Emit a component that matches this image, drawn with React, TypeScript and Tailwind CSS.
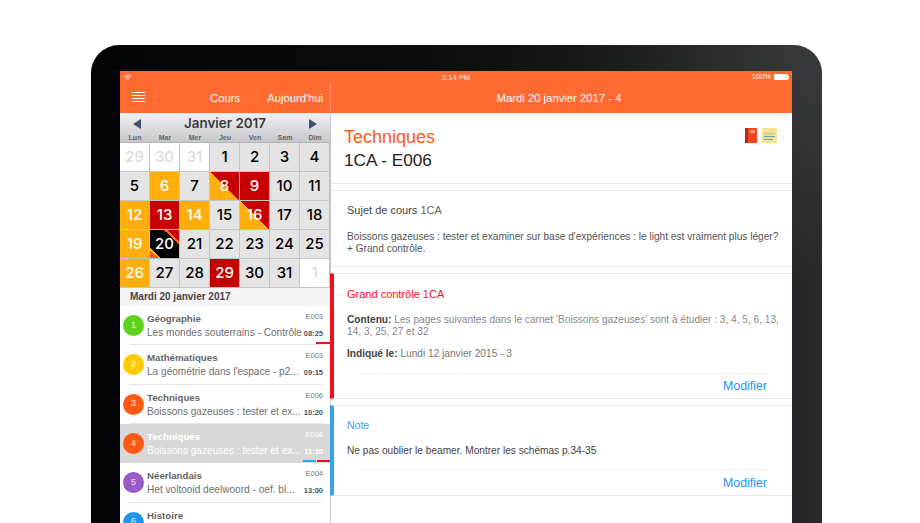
const days = [
  { n: 29, c: "muted" }, { n: 30, c: "muted" }, { n: 31, c: "muted" }, { n: 1 }, { n: 2 }, { n: 3 }, { n: 4 },
  { n: 5 }, { n: 6, c: "amber" }, { n: 7 }, { n: 8, c: "split" }, { n: 9, c: "red" }, { n: 10 }, { n: 11 },
  { n: 12, c: "amber" }, { n: 13, c: "red" }, { n: 14, c: "amber" }, { n: 15 }, { n: 16, c: "split" }, { n: 17 }, { n: 18 },
  { n: 19, c: "amber" }, { n: 20, c: "today" }, { n: 21 }, { n: 22 }, { n: 23 }, { n: 24 }, { n: 25 },
  { n: 26, c: "amber" }, { n: 27 }, { n: 28 }, { n: 29, c: "red" }, { n: 30 }, { n: 31 }, { n: 1, c: "muted" },
];

const dayStyles: Record<string, string> = {
  default: "bg-[#e4e4e4] text-black",
  muted: "bg-white text-[#dcdcdc]",
  amber: "bg-[#ffae0b] text-white",
  red: "bg-[#c60000] text-white",
  split: "bg-[linear-gradient(to_top_right,#ffae0b_50%,#c60000_50%)] text-white",
  today:
    "bg-[linear-gradient(to_top_right,#ff5a13_14%,#ffae0b_14%,#ffae0b_18%,#000_18%,#000_74%,#ff6a13_74%,#ff6a13_80%,#c60000_80%)] text-white",
};

const lessons = [
  { n: 1, color: "bg-[#5fd31c]", title: "Géographie", room: "E003", text: "Les mondes souterrains - Contrôle", time: "08:25" },
  { n: 2, color: "bg-[#ffcb05]", title: "Mathématiques", room: "E003", text: "La géométrie dans l'espace - p2...", time: "09:15" },
  { n: 3, color: "bg-[#ff5a14]", title: "Techniques", room: "E006", text: "Boissons gazeuses : tester et ex...", time: "10:20" },
  { n: 4, color: "bg-[#ff5a14]", title: "Techniques", room: "E006", text: "Boissons gazeuses : tester et ex...", time: "11:10", active: true },
  { n: 5, color: "bg-[#9a5ac8]", title: "Néerlandais", room: "E004", text: "Het voltooid deelwoord - oef. bl...", time: "13:00" },
  { n: 6, color: "bg-[#1f96ee]", title: "Histoire", room: "", text: "", time: "" },
];

function Wifi() {
  return (
    <svg width="9" height="7" viewBox="0 0 9 7" fill="none" stroke="#fff" strokeWidth="0.9">
      <path d="M0.5 2.4C2.8 0.5 6.2 0.5 8.5 2.4" />
      <path d="M2 3.9C3.4 2.8 5.6 2.8 7 3.9" />
      <path d="M3.4 5.3C4 4.8 5 4.8 5.6 5.3" />
    </svg>
  );
}

function Battery() {
  return (
    <span className="flex items-center">
      <span className="h-[6px] w-[14px] rounded-[1px] bg-white" />
      <span className="h-[3px] w-[1px] bg-white" />
    </span>
  );
}

function Hamburger() {
  return (
    <div className="-mt-[3px] flex w-[13px] flex-col gap-[2px]">
      <span className="h-px bg-white" />
      <span className="h-px bg-white" />
      <span className="h-px bg-white" />
      <span className="h-px bg-white" />
    </div>
  );
}

function Calendar() {
  return (
    <div>
      <div className="h-[30px] border-b border-[#b4b4bc] bg-[linear-gradient(#f2f2f4,#c6c6cc)]">
        <div className="flex h-[20px] items-center justify-between pl-[13px] pr-[13px] pt-[2px]">
          <svg width="8" height="10" viewBox="0 0 8 10">
            <path d="M8 0V10L0 5Z" fill="#3f5068" />
          </svg>
          <span className="font-['Inter'] text-[13.4px] font-semibold leading-none text-[#3a3a3a]">Janvier 2017</span>
          <svg width="8" height="10" viewBox="0 0 8 10">
            <path d="M0 0V10L8 5Z" fill="#3f5068" />
          </svg>
        </div>
        <div className="grid grid-cols-7 text-center text-[7px] font-bold leading-[9px] text-[#666]">
          {["Lun", "Mar", "Mer", "Jeu", "Ven", "Sam", "Dim"].map((d) => (
            <span key={d}>{d}</span>
          ))}
        </div>
      </div>
      <div className="grid grid-cols-7 bg-[#c4c4c4]">
        {days.map((d, i) => (
          <div
            key={i}
            className={`flex h-[29px] items-center justify-center border-r border-b border-[#c4c4c4] pt-px font-['Inter'] text-[15px] font-medium ${dayStyles[d.c ?? "default"]}`}
          >
            {d.n}
          </div>
        ))}
      </div>
    </div>
  );
}

function LessonRow({ l }: { l: (typeof lessons)[number] }) {
  return (
    <div className={`relative flex h-[39.35px] pl-[3px] ${l.active ? "bg-[#d8d8d8]" : "bg-white"}`}>
      <div className={`mt-[9px] flex h-[21px] w-[21px] shrink-0 items-center justify-center rounded-full text-[9px] text-white/80 ${l.color}`}>
        {l.n}
      </div>
      <div className="ml-[3px] min-w-0 flex-1 pr-[7px] pt-[6px]">
        <div className="flex items-start justify-between">
          <span className={`text-[9.7px] font-bold leading-[13px] ${l.active ? "text-white" : "text-[#666]"}`}>{l.title}</span>
          <span className={`text-[7.5px] leading-[10px] ${l.active ? "text-white" : "text-[#777]"}`}>{l.room}</span>
        </div>
        <div className="mt-px flex items-end justify-between">
          <span className={`text-[10.1px] leading-[13px] whitespace-nowrap ${l.active ? "text-white" : "text-[#707070]"}`}>{l.text}</span>
          <span className={`text-[7.5px] font-bold leading-[11px] ${l.active ? "text-white" : "text-[#555]"}`}>{l.time}</span>
        </div>
      </div>
      {!l.active && <span className="absolute right-[7px] bottom-0 left-[10px] h-px bg-[#e6e6e6]" />}
      {l.n === 1 && <span className="absolute right-0 bottom-[1px] h-[2px] w-[14px] bg-[#f50f1a]" />}
      {l.active && (
        <>
          <span className="absolute right-[14px] bottom-[1px] h-[2px] w-[13px] bg-[#35a3f3]" />
          <span className="absolute right-0 bottom-[1px] h-[2px] w-[13px] bg-[#f50f1a]" />
        </>
      )}
    </div>
  );
}

function Sidebar() {
  return (
    <aside className="w-[211px] shrink-0 overflow-hidden border-r border-[#c8c8c8] bg-white">
      <Calendar />
      <div className="h-[18px] bg-[#f5f5f5] pl-[10px] text-[10px] font-bold leading-[18px] text-[#444]">Mardi 20 janvier 2017</div>
      {lessons.map((l) => (
        <LessonRow key={l.n} l={l} />
      ))}
    </aside>
  );
}

function Modifier() {
  return (
    <div className="mt-[13px] ml-[13px] mr-[13px] border-t border-[#f0f0f0] pt-[5px] text-right text-[12.4px] leading-[14px] text-[#2b93f5]">
      Modifier
    </div>
  );
}

function Detail() {
  return (
    <main className="relative z-10 min-w-0 flex-1 bg-white">
      <div className="flex h-[71px] justify-between border-b border-[#e8e8e8] pl-[13px] pr-[15px] pt-[12px]">
        <div>
          <div className="text-[18px] leading-[24px] text-[#ff5a14]">Techniques</div>
          <div className="text-[17.2px] leading-[22px] text-[#222]">1CA - E006</div>
        </div>
        <div className="flex gap-[5px] pt-[3px]">
          <svg width="12" height="15" viewBox="0 0 12 15">
            <rect width="12" height="15" rx="1" fill="#f2451a" />
            <rect width="3" height="15" fill="#b02a18" />
            <rect x="5" y="2" width="5" height="3" fill="#f79a78" />
          </svg>
          <svg width="15" height="15" viewBox="0 0 15 15">
            <rect width="15" height="15" rx="1" fill="#fde08e" />
            <rect x="2" y="5" width="11" height="1.5" fill="#b8cfa6" />
            <rect x="2" y="8" width="11" height="1" fill="#6c9cb4" />
            <rect x="2" y="11" width="9" height="1" fill="#6c9cb4" />
          </svg>
        </div>
      </div>

      <section className="mt-[6px] h-[77px] border-y border-[#e8e8e8] pl-[16px] pr-[12px] pt-[13px]">
        <div className="text-[11px] leading-[13px] text-[#444]">
          Sujet de cours <span className="text-[#666]">1CA</span>
        </div>
        <p className="mt-[14px] text-[10.15px] leading-[12px] text-[#555]">
          Boissons gazeuses : tester et examiner sur base d'expériences : le light est vraiment plus léger? + Grand contrôle.
        </p>
      </section>

      <section className="mt-[6px] -ml-px h-[126px] border-y border-l-[4px] border-[#e8e8e8] border-l-[#f50f1a] pl-[13px] pr-[12px] pt-[14px]">
        <div className="text-[11px] leading-[13px] text-[#f5111e]">Grand contrôle 1CA</div>
        <p className="mt-[13px] text-[10.15px] leading-[12px] text-[#888]">
          <b className="text-[#444]">Contenu:</b> Les pages suivantes dans le carnet ‘Boissons gazeuses’ sont à étudier : 3, 4, 5, 6, 13, 14, 3, 25, 27 et 32
        </p>
        <p className="mt-[10px] text-[10.15px] leading-[12px] text-[#777]">
          <b className="text-[#444]">Indiqué le:</b> Lundi 12 janvier 2015 - 3
        </p>
        <Modifier />
      </section>

      <section className="mt-[6px] -ml-px h-[91px] border-y border-l-[4px] border-[#e8e8e8] border-l-[#35a3f3] pl-[13px] pr-[12px] pt-[13px]">
        <div className="text-[10.5px] leading-[13px] text-[#35a3f3]">Note</div>
        <p className="mt-[13px] text-[10.15px] leading-[12px] text-[#444]">Ne pas oublier le beamer. Montrer les schémas p.34-35</p>
        <Modifier />
      </section>
    </main>
  );
}

export default function App() {
  return (
    <div className="h-[523px] w-[920px] overflow-hidden bg-white font-['Liberation_Sans',Arial,sans-serif]">
      <div className="relative pl-[91px] pt-[45px]">
        <div className="h-[500px] w-[731px] rounded-t-[28px] bg-[radial-gradient(circle_at_100%_0%,rgba(255,255,255,0.09),transparent_240px),linear-gradient(90deg,#030408_0%,#0b0c10_45%,#26282b_100%)] pl-[29px] pt-[26px]">
          <div className="flex h-[452px] w-[672px] flex-col overflow-hidden bg-white">
            <header className="h-[42px] shrink-0 bg-[#ff6a30] text-white">
              <div className="relative flex h-[12px] items-center justify-between pl-[3px] pr-[3px] text-[7.5px] text-white/90">
                <Wifi />
                <span className="absolute left-[322px] top-[2px] leading-[9px]">2:14 PM</span>
                <span className="flex items-center gap-[3px]">
                  100%
                  <Battery />
                </span>
              </div>
              <div className="flex h-[30px]">
                <div className="flex w-[211px] items-center border-r border-[#ff8c60] pl-[12px] text-[11.3px]">
                  <Hamburger />
                  <span className="ml-[65px]">Cours</span>
                  <span className="ml-[27px] whitespace-nowrap">Aujourd'hui</span>
                </div>
                <div className="flex flex-1 items-center justify-center pr-[5px] text-[11.3px]">Mardi 20 janvier 2017 - 4</div>
              </div>
            </header>
            <div className="flex min-h-0 flex-1">
              <Sidebar />
              <Detail />
            </div>
          </div>
        </div>
        <div className="absolute bottom-0 left-[78px] h-[4px] w-[772px] bg-[linear-gradient(rgba(220,220,220,0),rgba(190,190,190,0.75))]" />
      </div>
    </div>
  );
}
